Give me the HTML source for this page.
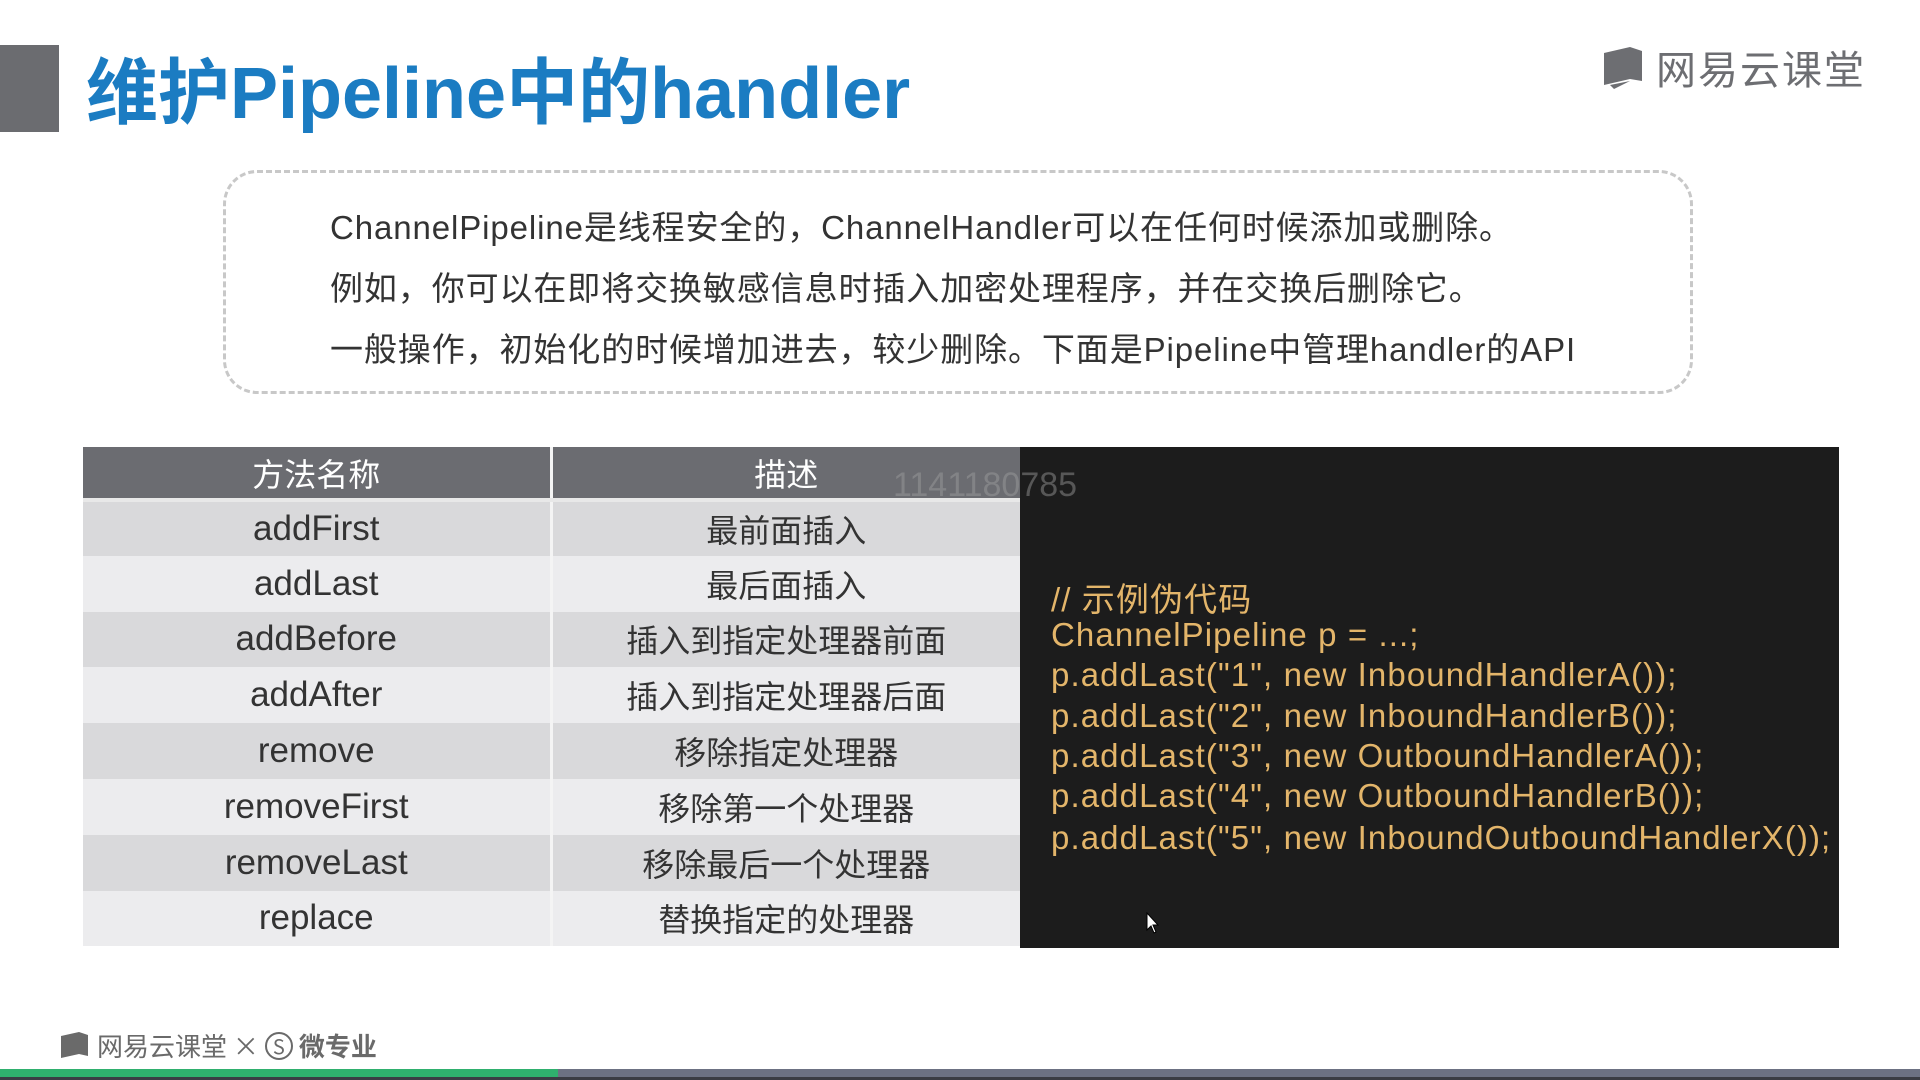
<!DOCTYPE html>
<html><head><meta charset="utf-8"><style>
*{margin:0;padding:0;box-sizing:border-box}
body{width:1920px;height:1080px;background:#fff;position:relative;overflow:hidden;font-family:"Liberation Sans","Noto Sans CJK SC",sans-serif}
.abs{position:absolute}
.blk{left:0;top:45px;width:59px;height:87px;background:#6b6c70}
.title{left:86px;top:34px;font-size:72px;font-weight:bold;color:#1b7cc2;white-space:nowrap;letter-spacing:0px}
.logo{left:1600px;top:44px;height:46px;display:flex;align-items:center;color:#6d6e72;font-size:40px;font-family:"Noto Sans CJK SC",sans-serif;letter-spacing:2px}
.box{left:223px;top:170px;width:1470px;height:224px;border:3px dashed #c8c8c8;border-radius:34px}
.txt{left:330px;font-size:33px;color:#333;white-space:nowrap;letter-spacing:0.9px;font-family:"Liberation Sans","Noto Sans CJK SC",sans-serif}
table{position:absolute;left:83px;top:447px;width:937px;border-collapse:collapse}
td,th{height:55.8px;text-align:center;font-size:32px;color:#333;font-weight:normal;padding:0}
td:first-child{font-size:35px}
th{background:#6b6c71;color:#fff;height:53px;border-bottom:4px solid #e8e8e8}
td:first-child,th:first-child{width:468px;border-right:3px solid #f4f4f4}
tr.o td{background:#d9d9db}
tr.e td{background:#ececee}
.code{left:1020px;top:447px;width:819px;height:501px;background:#1c1c1c}
.cl{left:1051px;font-size:33px;color:#e3b56a;white-space:nowrap;letter-spacing:1.1px}
.wm{left:893px;top:466px;font-size:34px;color:rgba(160,160,160,.45)}
.foot{left:59px;top:1027px;font-size:26px;color:#6a6a6a;font-family:"Noto Sans CJK SC",sans-serif;display:flex;align-items:center;gap:6px}
</style></head><body>
<div class="abs blk"></div>
<div class="abs title">维护Pipeline中的handler</div>
<div class="abs logo"><svg width="46" height="44" viewBox="0 0 46 44"><path d="M4 8 L30 2 L30 34 L4 40 Z" fill="#6d6e72"/><path d="M30 2 L42 6 L42 36 L30 34 Z" fill="#6d6e72"/><path d="M10 40 L14 44 L30 36" fill="#6d6e72"/></svg><span style="margin-left:10px">网易云课堂</span></div>
<div class="abs box"></div>
<div class="abs txt" style="top:201px">ChannelPipeline是线程安全的，ChannelHandler可以在任何时候添加或删除。</div>
<div class="abs txt" style="top:262px">例如，你可以在即将交换敏感信息时插入加密处理程序，并在交换后删除它。</div>
<div class="abs txt" style="top:323px">一般操作，初始化的时候增加进去，较少删除。下面是Pipeline中管理handler的API</div>
<table>
<tr><th>方法名称</th><th>描述</th></tr>
<tr class="o"><td>addFirst</td><td>最前面插入</td></tr>
<tr class="e"><td>addLast</td><td>最后面插入</td></tr>
<tr class="o"><td>addBefore</td><td>插入到指定处理器前面</td></tr>
<tr class="e"><td>addAfter</td><td>插入到指定处理器后面</td></tr>
<tr class="o"><td>remove</td><td>移除指定处理器</td></tr>
<tr class="e"><td>removeFirst</td><td>移除第一个处理器</td></tr>
<tr class="o"><td>removeLast</td><td>移除最后一个处理器</td></tr>
<tr class="e"><td>replace</td><td>替换指定的处理器</td></tr>
</table>
<div class="abs code"></div>
<div class="abs cl" style="top:573px">// 示例伪代码</div>
<div class="abs cl" style="top:616px">ChannelPipeline p = ...;</div>
<div class="abs cl" style="top:656px">p.addLast("1", new InboundHandlerA());</div>
<div class="abs cl" style="top:697px">p.addLast("2", new InboundHandlerB());</div>
<div class="abs cl" style="top:737px">p.addLast("3", new OutboundHandlerA());</div>
<div class="abs cl" style="top:777px">p.addLast("4", new OutboundHandlerB());</div>
<div class="abs cl" style="top:819px">p.addLast("5", new InboundOutboundHandlerX());</div>
<div class="abs wm">1141180785</div>
<svg class="abs" style="left:1146px;top:912px" width="14" height="22" viewBox="0 0 14 22"><path d="M1 1 L1 18 L5 14 L8 21 L10 20 L7 13 L12 13 Z" fill="#fff" stroke="#000" stroke-width="1"/></svg>
<div class="abs foot"><svg width="32" height="30" viewBox="0 0 32 30"><path d="M2 5 L20 1 L20 23 L2 27 Z M20 1 L29 4 L29 25 L20 23 Z" fill="#6a6a6a"/></svg><span>网易云课堂 ×</span><span style="display:inline-block;width:28px;height:28px;border:2px solid #6a6a6a;border-radius:50%;text-align:center;line-height:24px;font-size:20px">S</span><span style="font-weight:bold">微专业</span></div>
<div class="abs" style="left:0;top:1069px;width:558px;height:8px;background:#2fb06e"></div>
<div class="abs" style="left:558px;top:1069px;width:1362px;height:8px;background:#6c7183"></div>
<div class="abs" style="left:0;top:1077px;width:1920px;height:3px;background:#3a3c44"></div>
</body></html>
